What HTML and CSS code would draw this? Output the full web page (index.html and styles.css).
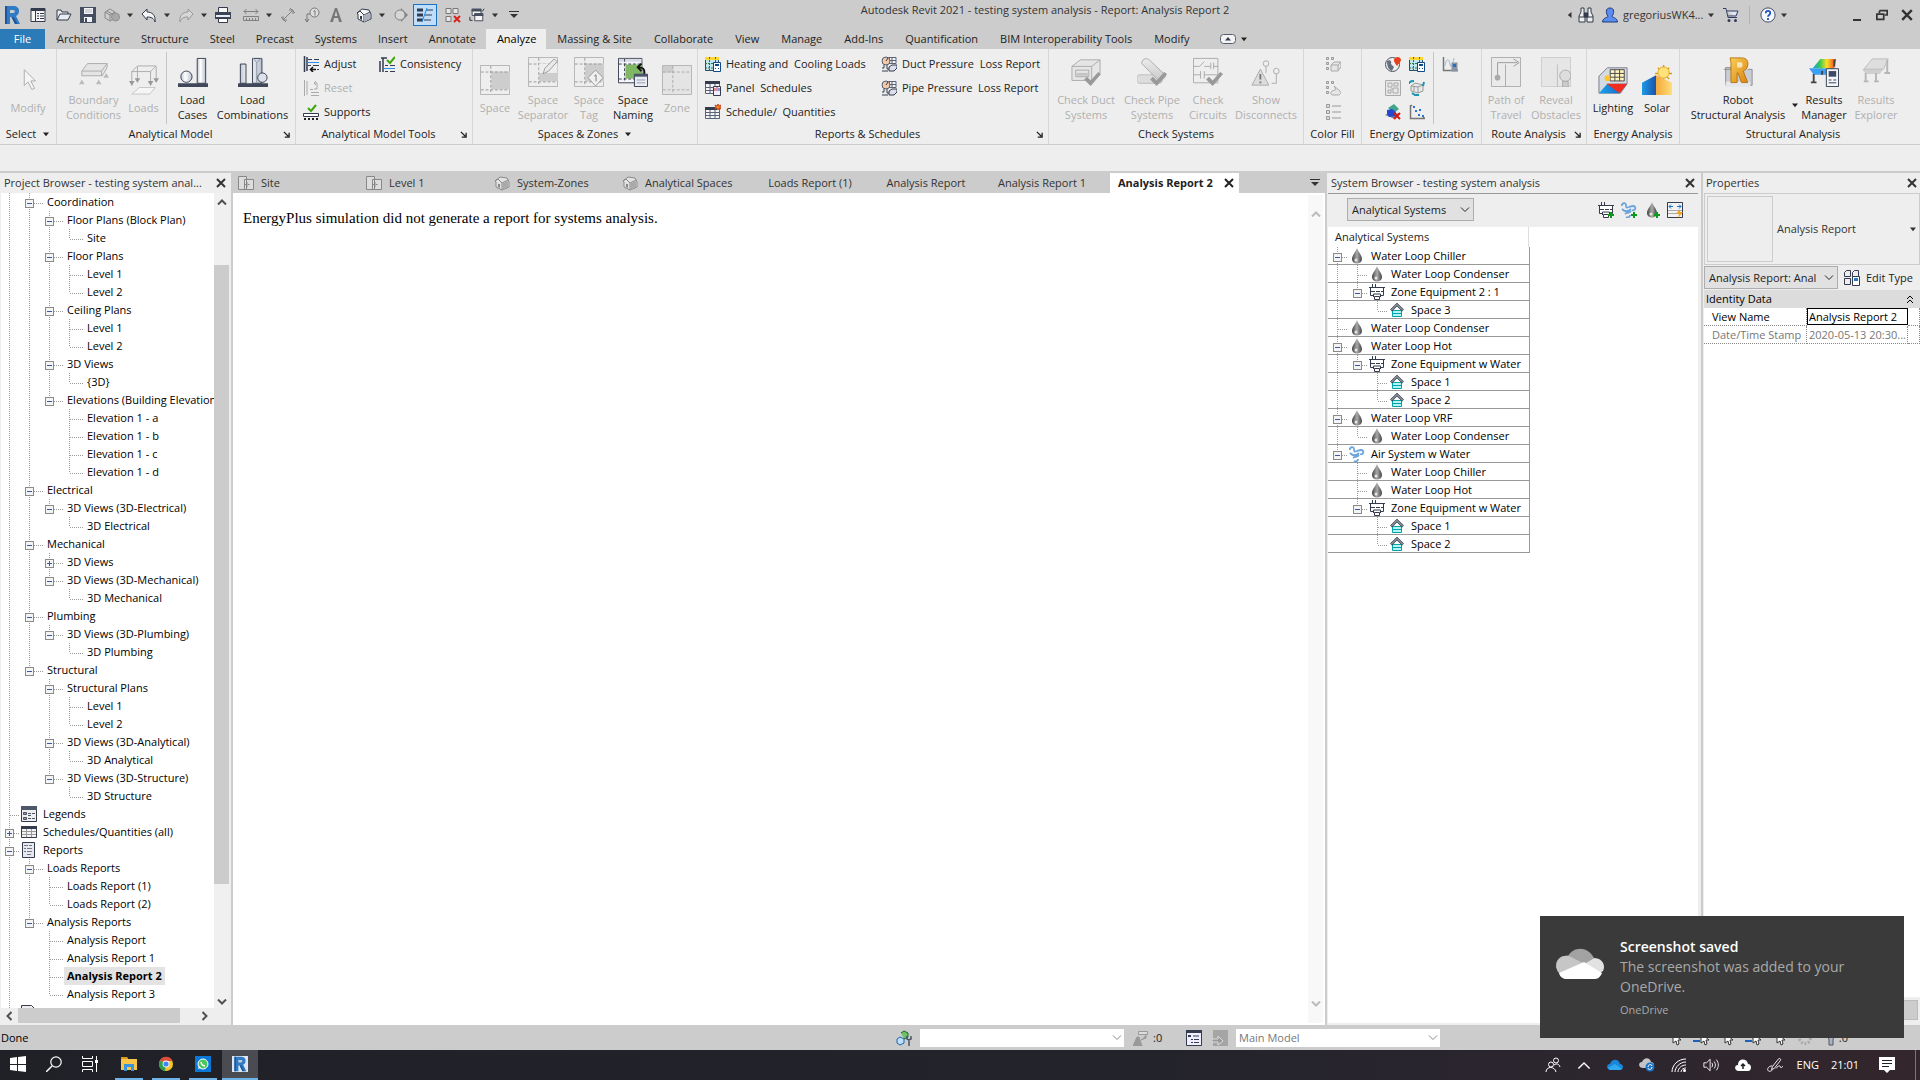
FILE: index.html
```html
<!DOCTYPE html>
<html lang="en">
<head>
<meta charset="utf-8">
<title>Autodesk Revit 2021 - testing system analysis</title>
<link rel="stylesheet" href="styles.css">
</head>
<body>
<svg class="sprite" aria-hidden="true">
  <defs>
    <linearGradient id="g-drop"><stop offset="0" stop-color="#444"/><stop offset=".5" stop-color="#aaa"/><stop offset="1" stop-color="#444"/></linearGradient>
    <linearGradient id="g-col"><stop offset="0" stop-color="#c2c8d4"/><stop offset=".4" stop-color="#fff"/><stop offset="1" stop-color="#b9c0cd"/></linearGradient>
    <linearGradient id="g-gray" x2="0" y2="1"><stop offset="0" stop-color="#ececec"/><stop offset="1" stop-color="#c6c6c6"/></linearGradient>
    <linearGradient id="g-heat"><stop offset="0" stop-color="#1b9ee8"/><stop offset=".3" stop-color="#35c94d"/><stop offset=".6" stop-color="#ffdf2a"/><stop offset="1" stop-color="#ee3524"/></linearGradient>
    <linearGradient id="g-gold" x2="1" y2="1"><stop offset="0" stop-color="#f9cf57"/><stop offset="1" stop-color="#db8410"/></linearGradient>
    <linearGradient id="g-sol"><stop offset="0" stop-color="#1c9be8"/><stop offset="1" stop-color="#1c52a8"/></linearGradient>
    <linearGradient id="g-sol2"><stop offset="0" stop-color="#f3a73a"/><stop offset="1" stop-color="#ffdf7a"/></linearGradient>
    <linearGradient id="g-blue"><stop offset="0" stop-color="#16a5ee"/><stop offset="1" stop-color="#2358c0"/></linearGradient>
  </defs>
  <symbol id="r" viewBox="0 0 16 20"><path d="M1 1h8c4 0 6 2 6 5 0 2.500-1 4-3 5l4 8h-5l-3.500-7H6v7H1z" fill="#2f7bc6"/><path d="M6 5h3c2.500 0 2.500 3 0 3H6z" fill="#ccc"/><path d="M1 1h2v18H1zM11 19l-3.500-7h2l4 7z" fill="#1b5597"/></symbol>
  <symbol id="list" viewBox="0 0 16 16"><path d="M1 1.500h14v13H1z" fill="#f4f4f4" stroke="#333b4c"/><path d="M1 1h14v3H1z" fill="#333b4c"/><path d="M5.500 4v10M7 6.500h2M10 6.500h4M7 9h2M10 9h4M7 11.500h2M10 11.500h4" stroke="#333b4c"/></symbol>
  <symbol id="open" viewBox="0 0 16 16"><path d="M1 13V3h4l1 2h6v2M1 13l3-6h11l-3 6z" fill="#e8ebf0" stroke="#333b4c" stroke-linejoin="round"/></symbol>
  <symbol id="save" viewBox="0 0 16 16"><path d="M0 0h16v16H0z" fill="#454e60"/><path d="M4 1h9v6H4zM4 10h8v5H4z" fill="#f2f3f6"/><path d="M5 3h7M5 5h7" stroke="#b5bac4"/><path d="M5 11h2v4H5z" fill="#454e60"/></symbol>
  <symbol id="sync" viewBox="0 0 16 16"><path d="M1 5l5-3 5 3v6l-5 3-5-3z" fill="#ccc" stroke="#8a8a8a"/><path d="M1 5l5 3 5-3M6 8v6M3 4l5 3" fill="none" stroke="#8a8a8a"/><circle cx="11.500" cy="10" r="4" fill="#a8a8a8" stroke="#909090"/></symbol>
  <symbol id="undo" viewBox="0 0 16 16"><path d="M1 7l5-5v3c5 0 9 3 8 10-1-4-4-5-8-5v3z" fill="#f4f4f4" stroke="#333b4c" stroke-linejoin="round"/></symbol>
  <symbol id="redo" viewBox="0 0 16 16"><path d="M15 7l-5-5v3C5 5 1 8 2 15c1-4 4-5 8-5v3z" fill="#d6d6d6" stroke="#999" stroke-linejoin="round"/></symbol>
  <symbol id="print" viewBox="0 0 16 16"><path d="M3.500 6V.500h9V6" fill="#f5f5f5" stroke="#333b4c"/><path d="M0 5h16v7H0z" fill="#3b4456"/><path d="M1 9h14" stroke="#e8ebf2" stroke-width="2"/><path d="M3.500 11.500h9v4h-9z" fill="#fff" stroke="#333b4c"/></symbol>
  <symbol id="measure" viewBox="0 0 16 16"><path d="M1 4.500h14M3.500 2L1 4.500 3.500 7M12.500 2L15 4.500 12.500 7" fill="none" stroke="#808080"/><path d="M.5 9.500h15v4H.5zM3.500 11v2M6.500 11v2M9.500 11v2M12.500 11v2" fill="none" stroke="#808080"/></symbol>
  <symbol id="dim" viewBox="0 0 16 16"><path d="M3 13L13 3M1 10l5 5M10 1l5 5M3 9v4h4M9 3h4v4" fill="none" stroke="#808080"/></symbol>
  <symbol id="tag" viewBox="0 0 16 16"><circle cx="10.500" cy="5.500" r="4.500" fill="#ddd" stroke="#777"/><path d="M9.500 4.500l1.500-1v5M6 7H3v8M1 12l2 3 2-3" fill="none" stroke="#777"/></symbol>
  <symbol id="a" viewBox="0 0 16 16"><path d="M2 15L7 1h2l5 14h-3l-1-4H6l-1 4zM6.500 9h3L8 4z" fill="#777"/></symbol>
  <symbol id="house" viewBox="0 0 16 16"><path d="M1 6l5-4 7 1 2 4v5l-7 3-6-3V7z" fill="#f6f6f6" stroke="#333b4c" stroke-linejoin="round"/><path d="M1 6l3-2 4 4v7M8 8l6-3" fill="none" stroke="#333b4c"/><path d="M8 8l6-2v6l-6 3z" fill="#a9afbb"/><path d="M4 9h2v4l-2-1z" fill="#333b4c"/></symbol>
  <symbol id="house-g" viewBox="0 0 16 16"><path d="M1 6l5-4 7 1 2 4v5l-7 3-6-3V7z" fill="#e2e2e2" stroke="#8a8a8a" stroke-linejoin="round"/><path d="M1 6l3-2 4 4v7M8 8l6-3" fill="none" stroke="#8a8a8a"/><path d="M8 8l6-2v6l-6 3z" fill="#aaa"/><path d="M4 9h2v4l-2-1z" fill="#888"/></symbol>
  <symbol id="section" viewBox="0 0 16 16"><path d="M8 1v14l7-7z" fill="#858585"/><circle cx="7" cy="8" r="5" fill="#d6d6d6" stroke="#858585"/></symbol>
  <symbol id="thin" viewBox="0 0 16 16"><path d="M0 3h6M0 8h6M0 13h6" stroke="#333b4c" stroke-width="3"/><path d="M9 3h7M8 8h7M7 13h7" stroke="#333b4c"/><path d="M10 1L5 15" stroke="#1c8ae6"/></symbol>
  <symbol id="closew" viewBox="0 0 16 16"><path d="M1 1.500h5v5H1zM8 1.500h5v5H8zM1 9.500h5v5H1z" fill="#e5e5e5" stroke="#777"/><path d="M9 9l6 6M15 9l-6 6" stroke="#d8221c" stroke-width="2"/></symbol>
  <symbol id="switch" viewBox="0 0 18 16"><path d="M3.500 1.500h10v7h-10zM6.500 6.500h9v8h-9z" fill="#f4f4f4" stroke="#333b4c"/><path d="M3 1h11v3H3zM6 6h10v3H6z" fill="#454e60"/><path d="M15 4l2-3M1 10v4h3" stroke="#222" fill="none"/></symbol>
  <symbol id="down" viewBox="0 0 8 8"><path d="M0 2h8L4 7z" fill="currentColor"/></symbol>
  <symbol id="downbar" viewBox="0 0 10 10"><path d="M0 1h10v1H0zM1 4h8L5 8z" fill="currentColor"/></symbol>
  <symbol id="left" viewBox="0 0 8 8"><path d="M6 0v8L1 4z" fill="currentColor"/></symbol>
  <symbol id="x" viewBox="0 0 10 10"><path d="M1 1l8 8M9 1L1 9" stroke="currentColor" stroke-width="2"/></symbol>
  <symbol id="chev" viewBox="0 0 10 6"><path d="M1 .5l4 4 4-4" fill="none" stroke="currentColor"/></symbol>
  <symbol id="chevb" viewBox="0 0 10 6"><path d="M1 .5l4 4 4-4" fill="none" stroke="currentColor" stroke-width="2"/></symbol>
  <symbol id="dblup" viewBox="0 0 8 9"><path d="M1 4l3-3 3 3M1 8l3-3 3 3" fill="none" stroke="#000"/></symbol>
  <symbol id="launch" viewBox="0 0 8 8"><path d="M1 1l5 5M7 2v5H2" fill="none" stroke="currentColor" stroke-width="1.500"/></symbol>
  <symbol id="bino" viewBox="0 0 16 16"><path d="M3 1h3v4l1 4v6H1V9l2-4zM10 1h3v4l2 4v6H9V9l1-4z" fill="#eee" stroke="#333b4c"/><path d="M6 6h4v4H6zM1 10h6M9 10h6" fill="#333b4c" stroke="#333b4c"/></symbol>
  <symbol id="user" viewBox="0 0 16 16"><path d="M8 1c5 0 4 6 2 8 0 2 5 1 5.500 6H.5C1 10 6 11 6 9 4 7 3 1 8 1z" fill="#5b8df0" stroke="#1f3a78"/></symbol>
  <symbol id="cart" viewBox="0 0 16 16"><path d="M0 1.500h3l2 9h9M4 4h11l-2 5H5" fill="#dfe5f2" stroke="#333b5c"/><circle cx="6" cy="13.500" r="1.500" fill="#333b5c"/><circle cx="12.500" cy="13.500" r="1.500" fill="#333b5c"/></symbol>
  <symbol id="help" viewBox="0 0 18 18"><circle cx="9" cy="9" r="8" fill="#f5f7fc" stroke="#333b5c"/><path d="M6.500 7c0-3.500 5-3.500 5 0 0 2-2.500 2-2.500 4M9 12.500v2" fill="none" stroke="#1d55c0" stroke-width="2"/></symbol>
  <symbol id="min" viewBox="0 0 12 12"><path d="M2 10h8v2H2z" fill="#333"/></symbol>
  <symbol id="restore" viewBox="0 0 14 12"><path d="M4 1h9v5h-3M4 4V1" fill="none" stroke="#333" stroke-width="2"/><path d="M1 5h8v6H1z" fill="none" stroke="#333" stroke-width="2"/></symbol>
  <symbol id="ribmin" viewBox="0 0 16 10"><rect x=".5" y=".5" width="15" height="9" rx="3" fill="#f3f3f3" stroke="#555e70"/><path d="M5 6.500h6L8 3z" fill="#333b4c"/></symbol>

  <symbol id="cursor" viewBox="0 0 32 32"><path d="M12 5v17l4-4 4 8 3-1-4-8h5z" fill="#f5f5f5" stroke="#aaa"/></symbol>
  <symbol id="boundary" viewBox="0 0 32 32"><path d="M3 15l6-8h21v4l-5 9H3z" fill="#e4e4e4" stroke="#aaa"/><path d="M3 15h21l6-8M24 15v5" fill="none" stroke="#aaa"/><path d="M3 24l3 5H0zM21 24l3 5h-6zM29 17l3 5h-6z" fill="#bbb"/></symbol>
  <symbol id="loads" viewBox="0 0 32 32"><path d="M3 7l6-6h20l-6 6zM3 7v15M23 7v15M29 2v16M9 2v15" fill="none" stroke="#aaa"/><path d="M11 24h17l-6 7H3z" fill="#f5f5f5" stroke="#c4c4c4"/><path d="M0 17h6l-3 5zM20 17h6l-3 5zM26 14h6l-3 5zM6 14h6l-3 5z" fill="#999"/></symbol>
  <symbol id="cases" viewBox="0 0 32 32"><circle cx="9" cy="21" r="6" fill="url(#g-col)" stroke="#333b4c"/><path d="M20.500 1.500h9V28h-9z" fill="url(#g-col)" stroke="#333b4c"/><path d="M0 28h32v4H0z" fill="#3f4758"/></symbol>
  <symbol id="combos" viewBox="0 0 32 32"><path d="M2.500 7.500h6V28h-6zM15.500 1.500h10V28h-10z" fill="url(#g-col)" stroke="#333b4c"/><path d="M16 1l4 5v22M25 1l-5 5" fill="none" stroke="#8a92a2"/><circle cx="26" cy="22" r="5" fill="#dde1ea" stroke="#333b4c"/><path d="M0 28h32v4H0z" fill="#3f4758"/></symbol>
  <symbol id="adjust" viewBox="0 0 16 16"><path d="M1.500 0v16M4 1v14" stroke="#333b4c" stroke-width="1.500"/><path d="M5 3.500h4M11 3.500h5M5 9.500h3M10 9.500h6M14 13.500h2" stroke="#333b4c"/><path d="M4 6.500h12" stroke="#2f8fe6"/><path d="M8 13.500h5M10 11l-2.500 2.500L10 16" stroke="#111" stroke-width="1.500" fill="none"/></symbol>
  <symbol id="reset" viewBox="0 0 16 16"><path d="M1.500 0v16M4 1v14M8 12.500h8M8 15.500h8M7 9.500h3M11 9h3V3h-3M13 1l-2 2 2 2" fill="none" stroke="#aaa"/></symbol>
  <symbol id="supports" viewBox="0 0 16 16"><path d="M.5 9.500h15v3H.5z" fill="#fff" stroke="#333b4c"/><path d="M1 14h2v2H1zM5 14h2v2H5zM9 14h2v2H9zM13 14h2v2h-2z" fill="#222"/><path d="M5 4l3 3 5-6" fill="none" stroke="#3da60a" stroke-width="2"/></symbol>
  <symbol id="consist" viewBox="0 0 16 16"><path d="M2 2h6M1 5v11M4 2v14" stroke="#333b4c" stroke-width="1.500"/><path d="M6 9.500h3M11 9.500h5M6 15.500h3M11 15.500h5" stroke="#333b4c"/><path d="M4 12.500h12" stroke="#2f8fe6"/><path d="M8 4l3 3 5-6" fill="none" stroke="#3da60a" stroke-width="2"/></symbol>
  <symbol id="space" viewBox="0 0 32 32"><path d="M.5 .5h31v31H.5z" fill="#eee" stroke="#b2b2b2"/><path d="M12 7h20v19H12z" fill="#cdcdcd"/><path d="M1 7.500h30M1 26.500h30M11.500 1v30" fill="none" stroke="#999" stroke-dasharray="3 2"/></symbol>
  <symbol id="zone" viewBox="0 0 32 32"><path d="M.5 .5h31v31H.5z" fill="#e4e4e4" stroke="#b2b2b2"/><path d="M1 1h11v7H1z" fill="#cdcdcd"/><path d="M1 7.500h30M1 26.500h30M11.500 1v30" fill="none" stroke="#aaa" stroke-dasharray="3 2"/></symbol>
  <symbol id="pencil" viewBox="0 0 32 32"><path d="M12 7h19v10H12z" fill="#eee"/><path d="M16 18l2-6L28 2l3 3-9 10z" fill="#e9e9e9" stroke="#999"/></symbol>
  <symbol id="diamond" viewBox="0 0 32 32"><path d="M23 14l8 8-8 9-8-9z" fill="#f0f0f0" stroke="#999"/><path d="M21.500 20.500l2-1.500v7" fill="none" stroke="#777"/></symbol>
  <symbol id="naming" viewBox="0 0 32 32"><path d="M.5 1.500h25v26H.5z" fill="#f6f6fa" stroke="#333b4c"/><path d="M1 2h24v3H1z" fill="#d5dae3"/><path d="M8 8h17v15H8z" fill="#7fb763"/><path d="M7 2v24M1 7.500h24M1 23.500h20" stroke="#333b4c" stroke-dasharray="3 2"/><path d="M28 19c1-7-2-8-6-8M25 7l-4 4 4 4" fill="none" stroke="#111" stroke-width="2"/><path d="M17.500 18.500h14v13h-14z" fill="#e8ecf4" stroke="#333b4c"/><path d="M17 18h15v3H17z" fill="#4a556c"/><path d="M20 24.500h9M20 27.500h9" stroke="#99a"/></symbol>
  <symbol id="calc" viewBox="0 0 16 16"><path d="M.5 1.500h13v13H.5z" fill="#bfe7f0" stroke="#2b4a5e"/><path d="M0 1h14v3H0z" fill="#ffd530"/><path d="M4.500 1v14M0 7.500h14M0 12h12M10.500 1v6" stroke="#2f6f58" stroke-dasharray="2 1"/><path d="M8.500 6.500h7v9h-7z" fill="#fff" stroke="#114a86"/><path d="M10 8h4v2h-4zM10 12h1v1h-1zM13 12h1v1h-1z" fill="#114a86"/></symbol>
  <symbol id="panel" viewBox="0 0 16 16"><path d="M.5 1.500h14v12H.5zM.5 7.500h14M.5 10.500h10M5 4v9M10 4v9" fill="#f4f4f8" stroke="#5a6376"/><path d="M0 1h15v3H0z" fill="#333b4c"/><path d="M8.500 6.500h7v9h-7z" fill="#eef" stroke="#333b4c"/><path d="M10 11V8M12 11V7" stroke="#c33"/><path d="M14 11V8" stroke="#24c"/></symbol>
  <symbol id="sched" viewBox="0 0 16 16"><path d="M.5 3.500h14v11H.5zM.5 8.500h14M.5 11.500h14M5 5v9M10 5v9" fill="#f4f4f8" stroke="#5a6376"/><path d="M0 3h12v3H0z" fill="#333b4c"/><path d="M13 0l1 2 2-1-1 2 1 2-2-1-1 2-1-2-2 1 1-2-1-2 2 1z" fill="#f08a12" stroke="#c42"/></symbol>
  <symbol id="gauge" viewBox="0 0 16 16"><path d="M8 1.500h7v6H8zM8 4.500h7M11 1v6" fill="#f4f4f8" stroke="#5a6376"/><circle cx="5" cy="5" r="4" fill="#f5c9a8" stroke="#555e70"/><path d="M5 5l2-3M3 9v3H1M6 9v4h3M1 15h6" stroke="#333b4c" fill="none"/><path d="M8 11l3-2h5v3l-3 3H8z" fill="#dde" stroke="#333b4c"/></symbol>
  <symbol id="ck" viewBox="0 0 32 32"><path d="M14 24l3-3 4 4 8-9 3 2-11 13z" fill="#999"/></symbol>
  <symbol id="duct" viewBox="0 0 32 32"><path d="M1 10l9-7h21v14l-8 8H1z" fill="#e5e5e5" stroke="#aaa"/><path d="M1 10h21v15M22 10l9-7M5 14h14v7H5z" fill="none" stroke="#aaa"/><path d="M6 17h12v3H6z" fill="#c4c4c4"/><use href="#ck"/></symbol>
  <symbol id="pipe" viewBox="0 0 32 32"><path d="M2 19h22c4 0 4 9 0 9H2c-3-1-3-8 0-9z" fill="#ddd" stroke="#bbb"/><path d="M5 7c0-4 4-7 8-4l18 17-6 7z" fill="url(#g-gray)" stroke="#aaa"/><use href="#ck"/></symbol>
  <symbol id="circuit" viewBox="0 0 32 32"><path d="M.5 1.500h26v26H.5zM1 10h6l5-5M12 10h7M19 6v7M22 6v7M22 10h5M1 19h7M8 15v8M12 15v8M12 19h14" fill="none" stroke="#aaa"/><use href="#ck"/></symbol>
  <symbol id="disc" viewBox="0 0 32 32"><circle cx="16" cy="7" r="3" fill="#eee" stroke="#aaa"/><circle cx="27" cy="15" r="3" fill="#eee" stroke="#aaa"/><path d="M16 10v7M27 18v10h-5" fill="none" stroke="#aaa"/><path d="M10 13l9 17H1z" fill="#ddd" stroke="#aaa"/><path d="M10 18v6M10 26v2" stroke="#777" stroke-width="2"/></symbol>
  <symbol id="cf1" viewBox="0 0 16 16"><path d="M1.500 1.500h2v2h-2zM6.500 1.500h2v2h-2zM1.500 6.500h2v2h-2zM1.500 11.500h2v2h-2z" fill="#ddd" stroke="#999"/><path d="M6 9l3-3h7v5l-3 4H6zM6 9h7v5M13 9l3-3" fill="#e5e5e5" stroke="#aaa"/></symbol>
  <symbol id="cf2" viewBox="0 0 16 16"><path d="M1.500 1.500h2v2h-2zM6.500 1.500h2v2h-2zM1.500 6.500h2v2h-2zM1.500 11.500h2v2h-2z" fill="#ddd" stroke="#999"/><path d="M6 12c2-3 7 0 3-6l6 5c2 2 0 4-2 4H8c-2 0-3-2-2-3z" fill="#e5e5e5" stroke="#aaa"/></symbol>
  <symbol id="cf3" viewBox="0 0 16 16"><path d="M1.500 .5h3v3h-3zM1.500 6.500h3v3h-3zM1.500 12.500h3v3h-3z" fill="#ddd" stroke="#999"/><path d="M7 2h9M7 8h9M7 14h9" stroke="#999"/></symbol>
  <symbol id="globe" viewBox="0 0 16 16"><circle cx="7.500" cy="8.500" r="7" fill="#eef0f2" stroke="#4a5260"/><path d="M2 5c3-2 5 0 4 3l3 3-2 4C4 14 2 11 2 5z" fill="#65707c"/><path d="M12 10C9 6 8 4 10 2c2-2 6-1 6 2 0 2-3 4-4 6z" fill="#e8401c"/></symbol>
  <symbol id="plan" viewBox="0 0 16 16"><path d="M.5 .5h15v15H.5zM3 3h4v4H3zM9 3h4v3H9zM3 10h3v3H3zM8 8h5v5H8zM6 9h2" fill="#e7e7e7" stroke="#aaa"/></symbol>
  <symbol id="gen" viewBox="0 0 16 16"><path d="M2 6l4-3 8 2v6l-5 2-7-2z" fill="#e8e8e8" stroke="#999"/><path d="M2 6l7 1 5-2M9 7v6M5 6v5" fill="none" stroke="#999"/><path d="M0 4c0-3 3-3 5-3M15 2l-1 4M3 13l3 2h4" stroke="#1795b5" stroke-width="2" fill="none"/></symbol>
  <symbol id="del" viewBox="0 0 16 16"><path d="M0 11l6-3 9 2-5 5z" fill="#7a8088"/><path d="M3 4l6-4 5 5-5 4z" fill="#41a48c"/><path d="M2 6l5-1 4 3-1 4-6 1-2-3z" fill="#2449d0"/><path d="M9 9l6 6M15 9l-6 6" stroke="#d01c16" stroke-width="2"/></symbol>
  <symbol id="opt" viewBox="0 0 16 16"><path d="M1.500 1v13.500H16M1 3l2-2M14 13l2 1.500" fill="none" stroke="#777" stroke-width="1.500"/><path d="M4 2h2v2H4zM6 6h2v2H6zM10 5h2v2h-2zM9 10h2v2H9zM13 11h2v2h-2z" fill="#2676d8"/></symbol>
  <symbol id="chart" viewBox="0 0 16 16"><path d="M1.500 1v13.500H16" fill="none" stroke="#777" stroke-width="1.500"/><path d="M3 10c1-8 4-8 5-2s3-1 4-6" fill="none" stroke="#9cb8d4"/><path d="M9.500 6.500h6v9h-6z" fill="#8794a6"/><path d="M11 8h3v3h-3z" fill="#2a6cc0"/></symbol>
  <symbol id="path" viewBox="0 0 32 32"><path d="M.5 .5h31v31H.5z" fill="#eaeaea" stroke="#aaa"/><path d="M15 8h1v24h-1z" fill="#aaa"/><path d="M7 21V6h21M24 2l6 4-6 4" fill="none" stroke="#999"/><circle cx="7" cy="22" r="3" fill="#aaa"/></symbol>
  <symbol id="reveal" viewBox="0 0 32 32"><path d="M.5 .5h31v31H.5z" fill="#e6e6e6" stroke="#ccc"/><path d="M17.500 8v24" stroke="#bbb"/><circle cx="26" cy="20" r="6" fill="#ddd" stroke="#aaa"/><path d="M23 26h6v6h-6z" fill="#ccc" stroke="#aaa"/></symbol>
  <symbol id="lighting" viewBox="0 0 32 32"><path d="M1 30V12l9-9h21v17l-7 10z" fill="#d5dbe2" stroke="#778"/><path d="M1 30l9-10h21l-8 10z" fill="url(#g-blue)"/><path d="M9 20h22l-8 10z" fill="#ef2d1e"/><path d="M13 5h15v12H13z" fill="#fff3c0" stroke="#444"/><path d="M13 9h15M13 13h15M18 5v12M23 5v12" stroke="#444"/><circle cx="10" cy="14" r="3" fill="#ffc42e"/></symbol>
  <symbol id="solar" viewBox="0 0 32 32"><path d="M23 0v18M14 9h18M17 3l12 12M29 3L17 15" stroke="#d99a15" stroke-width="1.500"/><circle cx="23" cy="8" r="6" fill="#ffe27a" stroke="#e8a515"/><path d="M0 19l15-8v21H0z" fill="url(#g-sol)"/><path d="M15 11l17 8v13H15z" fill="url(#g-sol2)"/></symbol>
  <symbol id="robot" viewBox="0 0 32 34"><path d="M0 14h8v-2H2v20h30V14h-5" fill="#c8cdd5" stroke="#888"/><path d="M2 28h28v6H2z" fill="#e4e7eb"/><path d="M7 1h13c6 0 8 4 7 9-1 4-3 5-5 6l5 13h-7l-4-11h-1v11H8V6z" fill="url(#g-gold)" stroke="#b56d0a"/><path d="M15 6h4c3 0 3 6 0 6h-4z" fill="#f5e6c0"/></symbol>
  <symbol id="results" viewBox="0 0 32 32"><path d="M0 12h28l-6 7H5z" fill="#3aa0f5"/><path d="M4 12l8-10h17l-2 10z" fill="url(#g-heat)"/><path d="M5 18v9M2 27h6M27 3v7M14 15v4" stroke="#444" stroke-width="2"/><path d="M18.500 12.500h13v19h-13z" fill="#f3f5fa" stroke="#333b4c"/><path d="M21 15h8v6h-8z" fill="#3b4a66"/><path d="M21 24.500h3M26 24.500h3M21 27.500h8" stroke="#333b4c"/></symbol>
  <symbol id="explorer" viewBox="0 0 32 32"><path d="M1 13h23l-4 5H5z" fill="#cfcfcf"/><path d="M3 13l9-11h17l-5 11z" fill="#dedede" stroke="#bbb"/><path d="M5 17v9M3 26h5M16 17v9M14 26h5M28 3v14M25 17h6" stroke="#b5b5b5" stroke-width="2"/></symbol>

  <symbol id="sheet" viewBox="0 0 16 16"><path d="M.5 1.500h8v13H.5zM6.500 4.500h9v10h-9z" fill="#ddd" stroke="#888"/><path d="M9 7v5M6.500 9.500h6" stroke="#888" stroke-dasharray="2 1"/></symbol>
  <symbol id="legend" viewBox="0 0 16 16"><path d="M.5 .5h15v15H.5z" fill="#eee" stroke="#333b4c"/><path d="M0 0h16v4H0z" fill="#4f586b"/><path d="M2.500 6.500h3v2h-3zM2.500 11.500h3v2h-3z" fill="#99a" stroke="#4a5364"/><path d="M7 7.500h7M7 9.500h4M7 12.500h7" stroke="#4a5364" stroke-dasharray="3 1"/></symbol>
  <symbol id="schedt" viewBox="0 0 16 16"><path d="M.5 2.500h15v11H.5zM.5 7.500h15M.5 10.500h15M5.500 4v9M10.500 4v9" fill="#f2f2f2" stroke="#999"/><path d="M.5 2.500h15v11H.5z" fill="none" stroke="#333b4c"/><path d="M0 2h16v3H0z" fill="#333b4c"/></symbol>
  <symbol id="report" viewBox="0 0 16 16"><path d="M1.500 .5h12v15h-12z" fill="#e6eaee" stroke="#333b4c"/><path d="M3 3.500h4M8 3.500h3M3 6.500h2M6 6.500h5M3 9.500h2M6 9.500h5M6 12.500h4" stroke="#778"/></symbol>
  <symbol id="page" viewBox="0 0 16 16"><path d="M.5 1.500h10l4 4v9H.5z" fill="#eee" stroke="#333b4c"/></symbol>
  <symbol id="drop" viewBox="0 0 16 16"><path d="M8 0c1 4 5 7 5 11 0 6-10 6-10 0C3 7 7 4 8 0z" fill="url(#g-drop)"/><circle cx="7" cy="12" r="1.500" fill="#e5e5e5"/></symbol>
  <symbol id="equip" viewBox="0 0 16 16"><path d="M1.500 3.500h13v8h-13z" fill="#fff" stroke="#333b4c"/><path d="M0 3.500h16M1 7.500h5M7 7.500h4M12 7.500h3M3.500 0v4M6.500 0v4" fill="none" stroke="#333b4c"/><path d="M4.500 13v-3h7v3M5.500 12.500h5v3h-5z" fill="#fff" stroke="#333b4c"/></symbol>
  <symbol id="air" viewBox="0 0 16 16"><path d="M1 4c-1-3 4-4 4-1S5 6 8 5s5-2 6 0-1 4-3 3M1 7c3 3 6 3 9 0M4 12c2-2 4 0 6-3M5 15c2 1 4 0 4-2" fill="none" stroke="#6ba5db" stroke-width="1.800"/></symbol>
  <symbol id="spc" viewBox="0 0 16 16"><path d="M3.500 8.500h9v6h-9z" fill="#b5f4f4" stroke="#00a3a8"/><path d="M3 11.500h10" stroke="#00a3a8"/><path d="M2 8.500l6-6 6 6" fill="none" stroke="#333b4c" stroke-width="2.500"/><path d="M2 8.500l6-6 6 6" fill="none" stroke="#fff" stroke-width=".8"/></symbol>
  <symbol id="plus" viewBox="0 0 16 16"><path d="M10 13h6M13 10v6" stroke="#0d9a1c" stroke-width="2"/></symbol>
  <symbol id="fit" viewBox="0 0 16 16"><path d="M.5 .5h15v15H.5zM1 8.500h14M1 11.500h14" fill="#f3f3f3" stroke="#aaa"/><path d="M.5 .5h15v15H.5z" fill="none" stroke="#333b4c"/><path d="M2 4.500h4M10 4.500h4M4 2.500l-2 2 2 2M12 2.500l2 2-2 2" stroke="#1c6cc8" fill="none"/><path d="M13 7l-4 5h3l-1 4 5-6h-3z" fill="#f6a21a"/></symbol>
  <symbol id="etype" viewBox="0 0 16 16"><path d="M.5 2.500l2-2h4v6h-6zM8.500 2.500l2-2h4v6h-6zM.5 8.500h6v6h-6z" fill="#eee" stroke="#333b4c"/><path d="M8.500 6.500h7v9h-7z" fill="#fff" stroke="#333b4c"/><path d="M10 8h4v3h-4z" fill="#2a78c8"/></symbol>
  <symbol id="wset" viewBox="0 0 16 16"><path d="M5 3l3-2 4 2v4l-4 2" fill="#6fc06a" stroke="#1a6a20"/><path d="M1 9l3-2 4 2v4l-4 2-3-2z" fill="#bfe0fa" stroke="#1566b5"/><path d="M11 6v3l2 1 2-1V6M13 10v6" fill="none" stroke="#4a5568" stroke-width="1.500"/></symbol>
  <symbol id="edreq" viewBox="0 0 16 16"><path d="M5.500 1.500h9v3h-9z" fill="#ddd" stroke="#999"/><path d="M0 16l4-9h2l3 9zM13 5v3L8 10" fill="#999" stroke="#999"/></symbol>
  <symbol id="dopt" viewBox="0 0 16 16"><path d="M.5 .5h15v15H.5z" fill="#eef" stroke="#333b4c"/><path d="M0 0h16v3H0z" fill="#333b4c"/><path d="M2 5h3v2H2zM5 9h2v1H5zM5 12h2v1H5z" fill="#333b4c"/><path d="M7 6h6M8 9.500h5M8 12.500h5" stroke="#333b4c"/></symbol>
  <symbol id="doptg" viewBox="0 0 16 16"><path d="M1 0h15v16H1z" fill="#a5a5a5"/><path d="M0 9h6V6l5 5-5 4v-3H0z" fill="#999" stroke="#ddd"/></symbol>
  <symbol id="pick" viewBox="0 0 16 16"><path d="M0 3h8v4H0z" fill="#e99a23"/><path d="M6 3v10l3-2 1 4 2-1-1-4h3z" fill="#fff" stroke="#333"/></symbol>
  <symbol id="pickb" viewBox="0 0 16 16"><path d="M1 7h7M0 11h7" stroke="#1c62b8" stroke-width="2"/><path d="M8 3v10l3-2 1 4 2-1-1-4h3z" fill="#fff" stroke="#333"/></symbol>
  <symbol id="ring" viewBox="0 0 16 16"><circle cx="8" cy="8" r="5.500" fill="none" stroke="#aaa" stroke-width="3" stroke-dasharray="2 1.500"/></symbol>
  <symbol id="filter" viewBox="0 0 16 16"><path d="M1 3h14l-5 6v6H6V9z" fill="#aab4c0" stroke="#556"/></symbol>

  <symbol id="win" viewBox="0 0 16 16"><path d="M0 2l7-1v7H0zM8 1l8-1v8H8zM0 9h7v6l-7-1zM8 9h8v7l-8-1z" fill="#fff"/></symbol>
  <symbol id="search" viewBox="0 0 16 16"><circle cx="10" cy="6" r="5.200" fill="none" stroke="#fff" stroke-width="1.200"/><path d="M6 10l-6 6" stroke="#fff" stroke-width="1.500"/></symbol>
  <symbol id="tview" viewBox="0 0 16 16"><path d="M.5 0v2.500h10V0M.5 5.500h10v5H.5zM.5 16v-2.500h10V16M14.500 0v16" fill="none" stroke="#fff"/><path d="M13 4h3v3h-3z" fill="#fff"/></symbol>
  <symbol id="folder" viewBox="0 0 16 16"><path d="M0 1h6l1 2h9v11H0z" fill="#f7c64b"/><path d="M0 1h6l1 2H0z" fill="#d99b1d"/><path d="M3 8h10v7h-3v-4H6v4H3z" fill="#3a93dd"/></symbol>
  <symbol id="chrome" viewBox="0 0 16 16"><circle cx="8" cy="8" r="7" fill="#f6c628"/><path d="M8 8L2 4.400A7 7 0 0 1 14.500 5H8z" fill="#e04a3a"/><path d="M8 8l-1 7A7 7 0 0 1 2 4.400z" fill="#2f9e50"/><circle cx="8" cy="8" r="3.400" fill="#fff"/><circle cx="8" cy="8" r="2.600" fill="#4285f4"/></symbol>
  <symbol id="wa" viewBox="0 0 16 16"><path d="M0 0h16v16H0z" fill="#0b78d8"/><circle cx="8" cy="8" r="5" fill="#4bc95e" stroke="#fff"/><path d="M3 13l1-3 2 2z" fill="#fff"/><path d="M6 6c0 2 2 4 4 4" fill="none" stroke="#fff" stroke-width="1.500"/></symbol>
  <symbol id="people" viewBox="0 0 16 16"><circle cx="11" cy="3.500" r="2.500"/><circle cx="6" cy="7.500" r="2.500"/><path d="M1 15c0-6 9-6 10 0M9 8c3-2 5-1 6 2"/></symbol>
  <symbol id="cloud" viewBox="0 0 48 32"><path d="M12 26L0 20C-1 12 5 7 12 8c5-9 19-11 26 2z" fill="#a2a2a2"/><path d="M2 24C-3 15 4 6 13 8l16 8L6 27z" fill="#c6c6c6"/><path d="M28 16l10-6c8 0 12 7 9 13l-6 4z" fill="#e2e2e2"/><path d="M3 25l25-11 18 11c-2 5-5 6-8 6H11c-4 0-7-2-8-6z" fill="#fff"/></symbol>
  <symbol id="od" viewBox="0 0 16 12"><path d="M4 11C-1 11-1 5 3 5c2-6 9-5 10 0 4 0 4 6 0 6z" fill="#1887dc"/><path d="M1 9l7-4 7 5-2 1H3z" fill="#30a9f0"/></symbol>
  <symbol id="odg" viewBox="0 0 16 14"><path d="M4 10C-1 10-1 4 3 4c2-5 8-5 9 0 4 0 4 6 0 6z" fill="#c5c5c5"/><circle cx="11" cy="9" r="4.500" fill="#1b73c8"/><path d="M9 9c0-3 4-3 4-1M13 9c0 3-4 3-4 1" fill="none" stroke="#fff"/></symbol>
  <symbol id="wifi" viewBox="0 0 16 16"><path d="M1 15C1 8 7 2 15 2M4 15c0-5 5-10 11-10M7 15c0-4 4-7 8-7M10 15c0-3 3-4 5-4"/><circle cx="13.500" cy="13.500" r="1.500" fill="#fff" stroke="none"/></symbol>
  <symbol id="vol" viewBox="0 0 18 16"><path d="M1 5.500h3l4-4v13l-4-4H1zM10 5.500c1 2 1 3 0 5M12.500 4c2 3 2 5 0 8M15 2c3 4 3 8 0 12"/></symbol>
  <symbol id="cup" viewBox="0 0 16 12"><path d="M4 12C-1 12-1 6 3 6c0-7 9-7 10-1 4 0 4 7 0 7z" fill="#fff"/><path d="M8 10V5M6 7l2-2 2 2" fill="none" stroke="#222" stroke-width="1.500"/></symbol>
  <symbol id="pen" viewBox="0 0 18 16"><path d="M6 10L13 1c2-1 3 1 2 2l-7 9-3 1zM6 9c-4 0-6 3-5 5s5 1 5-1M10 12c2-3 5-4 5-2s3 0 3-1"/></symbol>
  <symbol id="note" viewBox="0 0 16 16"><path d="M0 0h16v13h-5l-3 3-3-3H0z" fill="#fff"/><path d="M3 3.500h10M3 6.500h10M3 9.500h7" stroke="#222"/></symbol>
</svg>

<div class="app">
  <header class="titlebar">
    <div class="qat">
      <button class="ic logo" aria-label="Revit"><svg><use href="#r"/></svg></button>
      <button class="ic home" aria-label="Home"><svg><use href="#list"/></svg></button>
      <button class="ic" aria-label="Open"><svg><use href="#open"/></svg></button>
      <button class="ic" aria-label="Save"><svg><use href="#save"/></svg></button>
      <button class="ic" aria-label="Synchronize"><svg><use href="#sync"/></svg></button><svg class="dd"><use href="#down"/></svg>
      <button class="ic" aria-label="Undo"><svg><use href="#undo"/></svg></button><svg class="dd"><use href="#down"/></svg>
      <button class="ic" aria-label="Redo"><svg><use href="#redo"/></svg></button><svg class="dd"><use href="#down"/></svg>
      <button class="ic" aria-label="Print"><svg><use href="#print"/></svg></button><span class="sep"></span>
      <button class="ic" aria-label="Measure"><svg><use href="#measure"/></svg></button><svg class="dd"><use href="#down"/></svg>
      <button class="ic" aria-label="Dimension"><svg><use href="#dim"/></svg></button>
      <button class="ic" aria-label="Tag"><svg><use href="#tag"/></svg></button>
      <button class="ic" aria-label="Text"><svg><use href="#a"/></svg></button><span class="sep"></span>
      <button class="ic" aria-label="3D view"><svg><use href="#house"/></svg></button><svg class="dd"><use href="#down"/></svg>
      <button class="ic" aria-label="Section"><svg><use href="#section"/></svg></button>
      <button class="ic on" aria-label="Thin lines"><svg><use href="#thin"/></svg></button><span class="sep"></span>
      <button class="ic" aria-label="Close inactive"><svg><use href="#closew"/></svg></button>
      <button class="ic" aria-label="Switch windows"><svg><use href="#switch"/></svg></button><svg class="dd"><use href="#down"/></svg>
      <button class="ic" aria-label="Customize"><svg class="s10"><use href="#downbar"/></svg></button>
    </div>
    <h1>Autodesk Revit 2021 - testing system analysis - Report: Analysis Report 2</h1>
    <div class="info">
      <svg class="s8"><use href="#left"/></svg>
      <button class="ic" aria-label="Search"><svg><use href="#bino"/></svg></button>
      <button class="ic" aria-label="Account"><svg><use href="#user"/></svg></button>
      <span class="name">gregoriusWK4...</span><svg class="s8"><use href="#down"/></svg>
      <button class="ic cart" aria-label="Store"><svg><use href="#cart"/></svg></button><span class="sep"></span>
      <button class="ic" aria-label="Help"><svg><use href="#help"/></svg></button><svg class="s8"><use href="#down"/></svg>
    </div>
    <div class="winbtns">
      <button class="ic" aria-label="Minimize"><svg class="s12"><use href="#min"/></svg></button>
      <button class="ic" aria-label="Restore"><svg class="s12"><use href="#restore"/></svg></button>
      <button class="ic" aria-label="Close"><svg class="s12"><use href="#x"/></svg></button>
    </div>
  </header>

  <nav class="tabs">
    <a href="#" class="file">File</a><a href="#">Architecture</a><a href="#">Structure</a><a href="#">Steel</a><a href="#">Precast</a><a href="#">Systems</a><a href="#">Insert</a><a href="#">Annotate</a><a href="#" class="cur">Analyze</a><a href="#">Massing &amp; Site</a><a href="#">Collaborate</a><a href="#">View</a><a href="#">Manage</a><a href="#">Add-Ins</a><a href="#">Quantification</a><a href="#">BIM Interoperability Tools</a><a href="#">Modify</a>
    <button class="ribmin" aria-label="Minimize ribbon"><svg><use href="#ribmin"/></svg><svg class="s8"><use href="#down"/></svg></button>
  </nav>

  <div class="ribbon">
    <section class="p1"><div class="body"><button class="big w56" disabled><svg><use href="#cursor"/></svg>Modify</button></div><h2>Select <svg class="s8"><use href="#down"/></svg></h2></section>
    <section class="p2"><div class="body">
      <button class="big w64" disabled><svg><use href="#boundary"/></svg>Boundary<br>Conditions</button><button class="big w36" disabled><svg><use href="#loads"/></svg>Loads</button><span class="vsep"></span><button class="big w44"><svg><use href="#cases"/></svg>Load<br>Cases</button><button class="big w76"><svg><use href="#combos"/></svg>Load<br>Combinations</button></div><h2 class="has-launch">Analytical Model<svg class="launch"><use href="#launch"/></svg></h2></section>
    <section class="p3"><div class="body start">
      <div class="col w76"><button class="small"><svg><use href="#adjust"/></svg>Adjust</button><button class="small" disabled><svg><use href="#reset"/></svg>Reset</button><button class="small"><svg><use href="#supports"/></svg>Supports</button></div>
      <div class="col"><button class="small"><svg><use href="#consist"/></svg>Consistency</button></div></div><h2 class="has-launch">Analytical Model Tools<svg class="launch"><use href="#launch"/></svg></h2></section>
    <section class="p4"><div class="body">
      <button class="big w44" disabled><svg><use href="#space"/></svg>Space</button><button class="big w52" disabled><svg><use href="#space"/><use href="#pencil"/></svg>Space<br>Separator</button><button class="big w40" disabled><svg><use href="#space"/><use href="#diamond"/></svg>Space<br>Tag</button><button class="big w48"><svg><use href="#naming"/></svg>Space<br>Naming</button><button class="big w40" disabled><svg><use href="#zone"/></svg>Zone</button></div><h2>Spaces &amp; Zones <svg class="s8"><use href="#down"/></svg></h2></section>
    <section class="p5"><div class="body start">
      <div class="col w176"><button class="small"><svg><use href="#calc"/></svg>Heating and&nbsp; Cooling Loads</button><button class="small"><svg><use href="#panel"/></svg>Panel&nbsp; Schedules</button><button class="small"><svg><use href="#sched"/></svg>Schedule/&nbsp; Quantities</button></div>
      <div class="col"><button class="small"><svg><use href="#gauge"/></svg>Duct Pressure&nbsp; Loss Report</button><button class="small"><svg><use href="#gauge"/></svg>Pipe Pressure&nbsp; Loss Report</button></div></div><h2 class="has-launch">Reports &amp; Schedules<svg class="launch"><use href="#launch"/></svg></h2></section>
    <section class="p6"><div class="body">
      <button class="big w68" disabled><svg><use href="#duct"/></svg>Check Duct<br>Systems</button><button class="big w64" disabled><svg><use href="#pipe"/></svg>Check Pipe<br>Systems</button><button class="big w48" disabled><svg><use href="#circuit"/></svg>Check<br>Circuits</button><button class="big w68" disabled><svg><use href="#disc"/></svg>Show<br>Disconnects</button></div><h2>Check Systems</h2></section>
    <section class="p7"><div class="body"><div class="col"><button class="small" disabled aria-label="Duct legend"><svg><use href="#cf1"/></svg></button><button class="small" disabled aria-label="Pipe legend"><svg><use href="#cf2"/></svg></button><button class="small" disabled aria-label="Color fill legend"><svg><use href="#cf3"/></svg></button></div></div><h2>Color Fill</h2></section>
    <section class="p8"><div class="body">
      <div class="col"><button class="small" aria-label="Location"><svg><use href="#globe"/></svg></button><button class="small" disabled aria-label="Energy settings"><svg><use href="#plan"/></svg></button><button class="small" aria-label="Delete energy model"><svg><use href="#del"/></svg></button></div>
      <div class="col"><button class="small" aria-label="Systems analysis"><svg><use href="#calc"/></svg></button><button class="small" aria-label="Generate"><svg><use href="#gen"/></svg></button><button class="small" aria-label="Optimize"><svg><use href="#opt"/></svg></button></div>
      <span class="vsep"></span>
      <div class="col"><button class="small" aria-label="Analysis"><svg><use href="#chart"/></svg></button></div></div><h2>Energy Optimization</h2></section>
    <section class="p9"><div class="body"><button class="big w44" disabled><svg><use href="#path"/></svg>Path of<br>Travel</button><button class="big w56" disabled><svg><use href="#reveal"/></svg>Reveal<br>Obstacles</button></div><h2 class="has-launch">Route Analysis<svg class="launch"><use href="#launch"/></svg></h2></section>
    <section class="p10"><div class="body"><button class="big w48"><svg><use href="#lighting"/></svg>Lighting</button><button class="big w40"><svg><use href="#solar"/></svg>Solar</button></div><h2>Energy Analysis</h2></section>
    <section class="p11"><div class="body"><button class="big w108"><svg><use href="#robot"/></svg>Robot<br>Structural Analysis</button><svg class="mid"><use href="#down"/></svg><button class="big w52"><svg><use href="#results"/></svg>Results<br>Manager</button><button class="big w52" disabled><svg><use href="#explorer"/></svg>Results<br>Explorer</button></div><h2>Structural Analysis</h2></section>
  </div>
  <div class="options"></div>

  <main>
    <aside class="browser">
      <div class="head"><h3>Project Browser - testing system anal...</h3><button class="ic" aria-label="Close"><svg class="s10"><use href="#x"/></svg></button></div>
      <div class="scroller">
        <ul class="tree">
          <li><ul>
            <li><div class="row"><button class="tog"></button>Coordination</div><ul>
              <li><div class="row"><button class="tog"></button>Floor Plans (Block Plan)</div><ul><li><div class="row">Site</div></li></ul></li>
              <li><div class="row"><button class="tog"></button>Floor Plans</div><ul><li><div class="row">Level 1</div></li><li><div class="row">Level 2</div></li></ul></li>
              <li><div class="row"><button class="tog"></button>Ceiling Plans</div><ul><li><div class="row">Level 1</div></li><li><div class="row">Level 2</div></li></ul></li>
              <li><div class="row"><button class="tog"></button>3D Views</div><ul><li><div class="row">{3D}</div></li></ul></li>
              <li><div class="row"><button class="tog"></button>Elevations (Building Elevation)</div><ul><li><div class="row">Elevation 1 - a</div></li><li><div class="row">Elevation 1 - b</div></li><li><div class="row">Elevation 1 - c</div></li><li><div class="row">Elevation 1 - d</div></li></ul></li></ul></li>
            <li><div class="row"><button class="tog"></button>Electrical</div><ul>
              <li><div class="row"><button class="tog"></button>3D Views (3D-Electrical)</div><ul><li><div class="row">3D Electrical</div></li></ul></li></ul></li>
            <li><div class="row"><button class="tog"></button>Mechanical</div><ul>
              <li><div class="row"><button class="tog more"></button>3D Views</div></li>
              <li><div class="row"><button class="tog"></button>3D Views (3D-Mechanical)</div><ul><li><div class="row">3D Mechanical</div></li></ul></li></ul></li>
            <li><div class="row"><button class="tog"></button>Plumbing</div><ul>
              <li><div class="row"><button class="tog"></button>3D Views (3D-Plumbing)</div><ul><li><div class="row">3D Plumbing</div></li></ul></li></ul></li>
            <li><div class="row"><button class="tog"></button>Structural</div><ul>
              <li><div class="row"><button class="tog"></button>Structural Plans</div><ul><li><div class="row">Level 1</div></li><li><div class="row">Level 2</div></li></ul></li>
              <li><div class="row"><button class="tog"></button>3D Views (3D-Analytical)</div><ul><li><div class="row">3D Analytical</div></li></ul></li>
              <li><div class="row"><button class="tog"></button>3D Views (3D-Structure)</div><ul><li><div class="row">3D Structure</div></li></ul></li></ul></li>
          </ul></li>
          <li><div class="row"><svg><use href="#legend"/></svg>Legends</div></li>
          <li><div class="row"><button class="tog more"></button><svg><use href="#schedt"/></svg>Schedules/Quantities (all)</div></li>
          <li><div class="row"><button class="tog"></button><svg><use href="#report"/></svg>Reports</div><ul>
            <li><div class="row"><button class="tog"></button>Loads Reports</div><ul><li><div class="row">Loads Report (1)</div></li><li><div class="row">Loads Report (2)</div></li></ul></li>
            <li><div class="row"><button class="tog"></button>Analysis Reports</div><ul><li><div class="row">Analysis Report</div></li><li><div class="row">Analysis Report 1</div></li><li><div class="row"><b>Analysis Report 2</b></div></li><li><div class="row">Analysis Report 3</div></li></ul></li></ul></li>
          <li><div class="row"><svg><use href="#page"/></svg>Sheets (all)</div></li>
          <li></li>
        </ul>
        <div class="vbar"><svg class="arr up"><use href="#chevb"/></svg><span class="thumb"></span><svg class="arr"><use href="#chevb"/></svg></div>
      </div>
      <div class="hbar"><svg class="arr lf"><use href="#chevb"/></svg><span class="thumb"></span><svg class="arr rt"><use href="#chevb"/></svg></div>
    </aside>

    <section class="doc">
      <div class="doctabs">
        <a href="#" class="v"><svg><use href="#sheet"/></svg>Site</a><a href="#" class="v"><svg><use href="#sheet"/></svg>Level 1</a><a href="#" class="v"><svg><use href="#house-g"/></svg>System-Zones</a><a href="#" class="v"><svg><use href="#house-g"/></svg>Analytical Spaces</a><a href="#" class="t">Loads Report (1)</a><a href="#" class="t">Analysis Report</a><a href="#" class="t">Analysis Report 1</a><a href="#" class="cur">Analysis Report 2<svg class="s10"><use href="#x"/></svg></a>
        <button class="ic" aria-label="Tab list"><svg class="s10"><use href="#downbar"/></svg></button>
      </div>
      <div class="page"><p>EnergyPlus simulation did not generate a report for systems analysis.</p><div class="fade"><svg class="arr up"><use href="#chevb"/></svg><svg class="arr"><use href="#chevb"/></svg></div></div>
    </section>

    <aside class="system">
      <div class="head"><h3>System Browser - testing system analysis</h3><button class="ic" aria-label="Close"><svg class="s10"><use href="#x"/></svg></button></div>
      <div class="tools">
        <label class="combo"><select aria-label="View"><option>Analytical Systems</option></select><svg><use href="#chev"/></svg></label>
        <div class="acts">
          <button class="ic" aria-label="Add zone equipment"><svg><use href="#equip"/><use href="#plus"/></svg></button><button class="ic" aria-label="Add air system"><svg><use href="#air"/><use href="#plus"/></svg></button><button class="ic" aria-label="Add water loop"><svg><use href="#drop"/><use href="#plus"/></svg></button><button class="ic" aria-label="Autofit columns"><svg><use href="#fit"/></svg></button></div>
      </div>
      <div class="syslist">
        <div class="colhead">Analytical Systems</div>
        <ul class="tree ruled">
          <li><div class="row"><button class="tog"></button><svg><use href="#drop"/></svg>Water Loop Chiller</div><ul>
            <li><div class="row"><svg><use href="#drop"/></svg>Water Loop Condenser</div></li>
            <li><div class="row"><button class="tog"></button><svg><use href="#equip"/></svg>Zone Equipment 2 : 1</div><ul><li><div class="row"><svg><use href="#spc"/></svg>Space 3</div></li></ul></li></ul></li>
          <li><div class="row"><svg><use href="#drop"/></svg>Water Loop Condenser</div></li>
          <li><div class="row"><button class="tog"></button><svg><use href="#drop"/></svg>Water Loop Hot</div><ul>
            <li><div class="row"><button class="tog"></button><svg><use href="#equip"/></svg>Zone Equipment w Water</div><ul><li><div class="row"><svg><use href="#spc"/></svg>Space 1</div></li><li><div class="row"><svg><use href="#spc"/></svg>Space 2</div></li></ul></li></ul></li>
          <li><div class="row"><button class="tog"></button><svg><use href="#drop"/></svg>Water Loop VRF</div><ul><li><div class="row"><svg><use href="#drop"/></svg>Water Loop Condenser</div></li></ul></li>
          <li><div class="row"><button class="tog"></button><svg><use href="#air"/></svg>Air System w Water</div><ul>
            <li><div class="row"><svg><use href="#drop"/></svg>Water Loop Chiller</div></li>
            <li><div class="row"><svg><use href="#drop"/></svg>Water Loop Hot</div></li>
            <li><div class="row"><button class="tog"></button><svg><use href="#equip"/></svg>Zone Equipment w Water</div><ul><li><div class="row"><svg><use href="#spc"/></svg>Space 1</div></li><li><div class="row"><svg><use href="#spc"/></svg>Space 2</div></li></ul></li></ul></li>
        </ul>
      </div>
    </aside>

    <aside class="props">
      <div class="head"><h3>Properties</h3><button class="ic" aria-label="Close"><svg class="s10"><use href="#x"/></svg></button></div>
      <div class="type"><span class="thumbnail"></span><span class="tname">Analysis Report</span><svg class="s8"><use href="#down"/></svg></div>
      <div class="inst"><label class="combo"><select aria-label="Instance"><option>Analysis Report: Anal</option></select><svg><use href="#chev"/></svg></label><button class="edit"><svg><use href="#etype"/></svg>Edit Type</button></div>
      <table>
        <thead><tr><th colspan="3"><div>Identity Data <svg><use href="#dblup"/></svg></div></th></tr></thead>
        <tbody><tr><td><label for="vn">View Name</label></td><td class="val"><input id="vn" value="Analysis Report 2"></td><td></td></tr>
        <tr class="ro"><td>Date/Time Stamp</td><td>2020-05-13 20:30...</td><td></td></tr></tbody>
      </table>
      <div class="apply"><button aria-label="Apply"></button></div>
    </aside>
  </main>

  <footer class="status">
    <span class="done">Done</span>
    <svg class="wset"><use href="#wset"/></svg>
    <label class="combo flat"><select aria-label="Workset"><option></option></select><svg><use href="#chev"/></svg></label>
    <svg><use href="#edreq"/></svg><span class="cnt">:0</span>
    <svg><use href="#dopt"/></svg><svg><use href="#doptg"/></svg>
    <label class="combo flat"><select aria-label="Design option"><option>Main Model</option></select><svg><use href="#chev"/></svg></label>
    <div class="selopts"><svg><use href="#pick"/></svg><svg><use href="#pickb"/></svg><svg><use href="#pick"/></svg><svg><use href="#pickb"/></svg><svg><use href="#pick"/></svg><svg><use href="#ring"/></svg><svg class="fl"><use href="#filter"/></svg><span>:0</span></div>
  </footer>
</div>

<footer class="taskbar">
  <button aria-label="Start"><svg><use href="#win"/></svg></button><button aria-label="Search"><svg><use href="#search"/></svg></button><button aria-label="Task view"><svg><use href="#tview"/></svg></button><button class="run" aria-label="File Explorer"><svg><use href="#folder"/></svg></button><button class="run" aria-label="Chrome"><svg><use href="#chrome"/></svg></button><button class="run" aria-label="WhatsApp"><svg><use href="#wa"/></svg></button><button class="run active" aria-label="Revit"><svg class="rv"><use href="#r"/></svg></button>
  <div class="tray">
    <svg class="ln"><use href="#people"/></svg><svg class="ln upc"><use href="#chev"/></svg><svg><use href="#od"/></svg><svg><use href="#odg"/></svg><svg class="ln"><use href="#wifi"/></svg><svg class="ln"><use href="#vol"/></svg><svg><use href="#cup"/></svg><svg class="ln"><use href="#pen"/></svg>
    <span class="lang">ENG</span><time>21:01</time><svg><use href="#note"/></svg><span class="peek"></span>
  </div>
</footer>

<div class="toast" role="status">
  <svg><use href="#cloud"/></svg>
  <div><strong>Screenshot saved</strong><p>The screenshot was added to your OneDrive.</p><small>OneDrive</small></div>
</div>
</body>
</html>
```
FILE: styles.css
```css
* { box-sizing: border-box; }
body {
  margin: 0;
  height: 100vh;
  display: flex;
  flex-direction: column;
  overflow: hidden;
  font: 11px/18px "Open Sans", "Noto Sans", sans-serif;
  color: #222;
  background: #ccc;
}
button, select, input { font: inherit; color: inherit; margin: 0; padding: 0; border: 0; background: none; border-radius: 0; }
a { color: inherit; text-decoration: none; }
h1, h2, h3, p, ul { margin: 0; padding: 0; font-size: inherit; font-weight: 400; list-style: none; }
svg { width: 16px; height: 16px; flex: none; display: block; }
.sprite { position: absolute; width: 0; height: 0; }
.s8 { width: 8px; height: 6px; }
.s10 { width: 10px; height: 10px; }
.s12 { width: 12px; height: 12px; }
.app { flex: 1; min-height: 0; display: flex; flex-direction: column; }

/* Title bar */
.titlebar { height: 29px; display: flex; align-items: center; color: #333; white-space: nowrap; }
.qat { width: 524px; flex: none; display: flex; align-items: center; }
.ic { width: 24px; height: 22px; flex: none; display: grid; place-items: center; }
.ic > svg { grid-area: 1 / 1; }
.logo > svg { height: 20px; }
.home { width: 28px; }
.dd { width: 6px; height: 6px; margin: 0 4px 0 3px; }
.sep { width: 1px; height: 18px; background: #b2b2b2; margin: 0 2px; }
.on { background: #c0defa; border: 1px solid #1a73c0; }
.titlebar h1 { flex: 1; text-align: center; padding-bottom: 9px; }
.info { display: flex; align-items: center; width: 230px; }
.info .name { margin: 0 4px 0 1px; }
.cart { margin-left: 4px; }
.info .sep { margin: 0 6px; }
.winbtns { display: flex; margin-left: 48px; width: 76px; }
.winbtns .ic { width: 25px; }

/* Ribbon tabs */
.tabs { height: 20px; display: flex; line-height: 20px; white-space: nowrap; }
.tabs a { padding: 0 10px 0 11px; }
.tabs .file { width: 45px; background: #2b7bb9; color: #fff; text-align: center; padding: 0; margin-right: 1px; }
.tabs .cur { background: #eee; color: #000; }
.tabs .cur ~ a { padding: 0 11px; }
.ribmin { display: flex; align-items: center; gap: 4px; margin-left: 20px; }
.ribmin svg:first-child { height: 10px; }

/* Ribbon */
.ribbon { height: 96px; display: flex; background: #eee; border-bottom: 1px solid #ccc; }
.ribbon section { flex: none; border-right: 1px solid #d6d6d6; display: flex; flex-direction: column; }
.body { height: 75px; padding-top: 3px; display: flex; justify-content: center; }
.start { justify-content: flex-start; padding-left: 7px; }
.ribbon h2 { height: 20px; line-height: 18px; display: flex; align-items: center; justify-content: center; gap: 6px; position: relative; white-space: nowrap; }
.ribbon .has-launch { padding-right: 11px; }
.launch { position: absolute; right: 5px; top: 7px; width: 7px; height: 7px; }
.big { display: flow-root; text-align: center; line-height: 15px; white-space: nowrap; }
.big svg { width: 30px; height: 30px; margin: 3px auto 5px; }
.small { display: flex; align-items: center; gap: 5px; height: 24px; white-space: nowrap; padding: 0 4px; }
.start .small { padding: 0; }
button:disabled { color: #b0b0b0; }
.vsep { width: 1px; margin: 0 4px; background: #c5c5c5; }
.mid { width: 6px; height: 6px; margin-top: 50px; }
.w36 { width: 36px; } .w40 { width: 40px; } .w44 { width: 44px; } .w48 { width: 48px; } .w52 { width: 52px; }
.w56 { width: 56px; } .w64 { width: 64px; } .w68 { width: 68px; } .w76 { width: 76px; } .w108 { width: 108px; } .w176 { width: 176px; }
.p1 { width: 57px; } .p2 { width: 239px; } .p3 { width: 177px; } .p4 { width: 225px; } .p5 { width: 351px; }
.p6 { width: 255px; } .p7 { width: 58px; } .p8 { width: 120px; } .p9 { width: 105px; } .p10 { width: 93px; }
.ribbon .p11 { flex: 1; border: 0; padding-right: 14px; }
.options { height: 28px; background: #eee; border-bottom: 2px solid #ccc; }

/* Docked panes */
main { flex: 1; min-height: 0; display: flex; gap: 2px; background: #ccc; }
aside { background: #eee; display: flex; flex-direction: column; flex: none; min-height: 0; }
.head { height: 20px; display: flex; align-items: center; justify-content: space-between; padding-left: 3px; color: #333; white-space: nowrap; flex: none; }
.head h3 { line-height: 20px; }
.head .ic { width: 16px; height: 20px; }
.browser { width: 231px; padding: 0 2px 2px 1px; }
.scroller { flex: 1; min-height: 0; display: flex; background: #fff; }
.scroller .tree { flex: 1; min-width: 0; overflow: hidden; margin-left: -1px; }
.arr { width: 10px; height: 6px; margin: 0 auto; color: #505050; }
.up { transform: rotate(180deg); }
.lf { transform: rotate(90deg); }
.rt { transform: rotate(-90deg); }
.vbar { width: 15px; background: #f0f0f0; display: grid; grid-template-rows: 72px 85fr 15fr 15px; }
.vbar .thumb { background: #ccc; }
.vbar .up { margin-top: 6px; }
.vbar .arr:last-child { grid-row: 4; margin-top: 6px; }
.hbar { height: 15px; margin-right: 15px; display: flex; align-items: center; }
.hbar .thumb { width: 164px; height: 15px; background: #ccc; }
.hbar .arr { margin: 0 4px 0 3px; }
.hbar .rt { margin-left: 20px; }

/* Tree with dotted connectors */
.tree { color: #000; white-space: nowrap; }
.tree ul { margin-left: 20px; }
.tree li { background: repeating-linear-gradient(#999 0 1px, transparent 1px 2px) 9px 0 / 1px 100% no-repeat; }
.tree li:last-child { background-size: 1px 10px; }
.row { height: 18px; line-height: 18px; display: flex; align-items: center; padding-left: 27px; background: repeating-linear-gradient(90deg, #999 0 1px, transparent 1px 2px) 10px 10px / 14px 1px no-repeat; }
.row:has(svg) { background-size: 10px 1px; }
.row svg { margin: 0 6px 0 -6px; }
.row b { font-weight: 700; background: #e3e3e3; margin-left: -3px; padding: 0 3px; }
.tog { width: 9px; height: 9px; margin: 2px 13px 0 -22px; border: 1px solid #8a8a8a; flex: none; background: linear-gradient(#3b5a9a, #3b5a9a) 1px 3px / 5px 1px no-repeat #f4f4f4; }
.more { background: linear-gradient(#3b5a9a, #3b5a9a) 1px 3px / 5px 1px no-repeat, linear-gradient(#3b5a9a, #3b5a9a) 3px 1px / 1px 5px no-repeat #f4f4f4; }

/* Report view */
.doc { flex: 1; min-width: 0; display: flex; flex-direction: column; }
.doctabs { height: 20px; display: flex; line-height: 20px; color: #333; white-space: nowrap; flex: none; }
.doctabs a { display: flex; align-items: center; }
.doctabs .v { width: 128px; padding-left: 5px; gap: 7px; }
.doctabs .t { width: 116px; justify-content: center; }
.doctabs .v + .t { margin-left: 7px; }
.doctabs .cur { background: #fff; color: #222; font-weight: 700; width: 129px; margin-left: 10px; justify-content: space-between; padding: 0 5px 0 8px; }
.doctabs .ic { margin-left: auto; width: 20px; height: 20px; }
.page { flex: 1; background: #fff; display: flex; justify-content: space-between; }
.page p { font: 15px/20px "Liberation Serif", "Times New Roman", serif; color: #000; padding: 15px 10px; }
.fade { width: 15px; margin: 2px; background: #f8f8f8; display: flex; flex-direction: column; justify-content: space-between; padding: 16px 0; }
.fade .arr { color: #bbb; }

/* System browser */
.system { width: 374px; padding: 0 3px 2px 1px; }
.system .head { border-bottom: 1px solid #999; height: 21px; }
.tools { height: 33px; display: flex; align-items: center; justify-content: space-between; padding: 0 12px 2px 19px; flex: none; }
.acts { display: flex; }
.acts .ic { width: 23px; }
.combo { display: grid; align-items: center; color: #222; }
.combo select { grid-area: 1 / 1; appearance: none; width: 127px; height: 23px; padding-left: 4px; background: #e1e1e1; border: 1px solid #adadad; }
.combo svg { grid-area: 1 / 1; justify-self: end; width: 10px; height: 6px; margin-right: 4px; pointer-events: none; }
.syslist { flex: 1; background: #fff; }
.colhead { width: 201px; height: 20px; line-height: 20px; padding-left: 7px; border-right: 1px solid #ddd; }
.ruled { width: 202px; border-right: 1px solid #999; background: repeating-linear-gradient(transparent 0 17px, #999 17px 18px); }

/* Properties */
.props { width: 217px; padding-left: 1px; }
.props .head { padding-left: 2px; }
.type { height: 72px; flex: none; border: 1px solid #ccc; display: flex; align-items: center; padding: 2px; color: #333; }
.thumbnail { width: 66px; height: 66px; border: 1px solid #ccc; }
.tname { flex: 1; padding-left: 4px; }
.inst { display: flex; align-items: center; height: 25px; flex: none; }
.inst select { width: 134px; }
.edit { display: flex; align-items: center; gap: 6px; margin-left: 6px; white-space: nowrap; }
.props table { display: block; flex: 1; background: #fff; color: #000; white-space: nowrap; }
.props thead, .props tbody { display: contents; }
.props tr { display: grid; grid-template-columns: 103px 101px 1fr; height: 18px; }
.props th { grid-column: 1 / -1; font-weight: 400; text-align: left; background: #dcdcdc; padding: 0 6px 0 2px; height: 18px; }
.props th div { display: flex; justify-content: space-between; align-items: center; }
.props th svg { width: 8px; height: 9px; }
.props td { height: 18px; line-height: 17px; padding: 0 0 0 8px; border-bottom: 1px dotted #888; border-right: 1px dotted #888; overflow: hidden; }
.props td + td { padding-left: 2px; }
.props .val { border: 0; padding: 0; }
.props input { display: block; width: 101px; height: 17px; padding: 0 1px; border: 1px solid #000; }
.ro { color: #777; }
.apply { height: 28px; padding: 3px 2px 5px; display: flex; justify-content: flex-end; flex: none; }
.apply button { width: 70px; background: #ccc; border: 1px solid #bbb; }

/* Status bar */
.status { height: 24px; margin-top: 1px; display: flex; align-items: center; white-space: nowrap; flex: none; }
.done { width: 896px; padding-left: 1px; color: #000; }
.flat { margin: 0 8px; }
.flat select { width: 204px; height: 18px; background: #fff; border: 0; padding-left: 3px; color: #777; }
.combo.flat svg { color: #888; margin-right: 2px; }
.wset + .flat { margin-right: 9px; }
.cnt { width: 37px; padding-left: 4px; }
.cnt + svg { margin-right: 10px; }
.selopts { margin-left: auto; margin-right: 72px; display: flex; gap: 10px; align-items: center; }
.selopts .fl { margin-right: -10px; }

/* Task bar */
.taskbar { height: 30px; flex: none; display: flex; background: linear-gradient(90deg, #202027, #23232c 60%, #2d262e 85%, #33262c); color: #fff; }
.taskbar button { width: 36px; display: grid; place-items: center; border-bottom: 2px solid transparent; }
.taskbar .run { width: 28px; border-color: #6fb3e8; }
.taskbar button + .run { margin-left: 9px; }
.taskbar button:nth-child(4) { margin-left: 7px; }
.taskbar .active, .taskbar button + .active { width: 36px; margin-left: 5px; background: #4b4b52; }
.rv { background: #dde6f2; }
.tray { margin-left: auto; display: flex; align-items: center; gap: 16px; }
.ln { fill: none; stroke: #fff; color: #fff; }
.upc { transform: rotate(180deg); width: 14px; }
.lang { margin-left: -2px; }
.tray time { margin: 0 4px 0 -4px; }
.peek { width: 5px; height: 30px; border-left: 1px solid #777; margin-left: 4px; }

/* Notification over the desktop */
.toast { position: fixed; right: 16px; bottom: 42px; width: 364px; height: 122px; background: #3a3a3a; color: #a9a9a9; display: flex; gap: 16px; padding: 21px 16px; }
.toast > svg { width: 48px; height: 32px; margin-top: 11px; }
.toast strong { display: block; color: #fff; font-size: 14px; line-height: 20px; font-weight: 600; }
.toast p { font-size: 14px; line-height: 20px; width: 240px; }
.toast small { display: block; font-size: 11px; line-height: 18px; margin-top: 4px; }
```
